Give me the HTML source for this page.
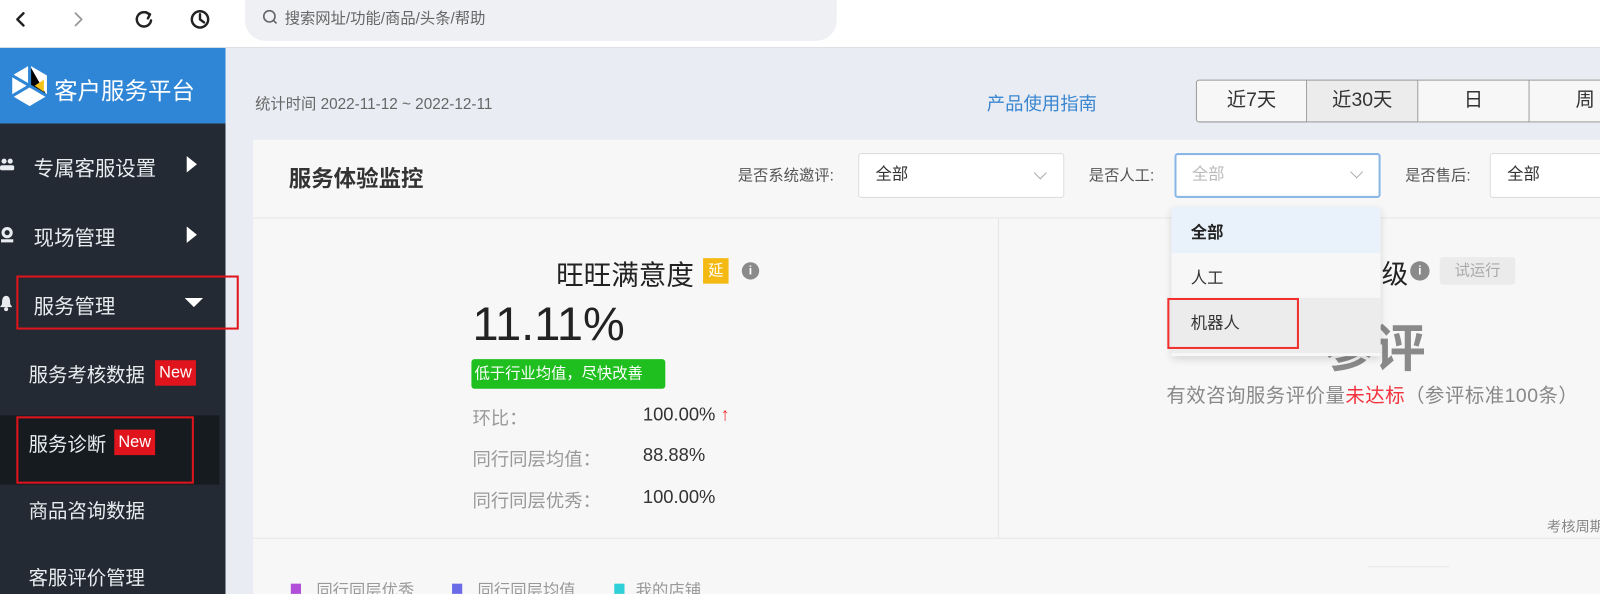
<!DOCTYPE html>
<html><head><meta charset="utf-8"><style>
*{margin:0;padding:0;box-sizing:border-box}
html,body{width:1600px;height:594px;overflow:hidden;background:#e9edf3}
body{position:relative;font-family:"Liberation Sans","Noto Sans CJK SC",sans-serif;color:#333}
#w{position:absolute;left:0;top:0;width:1568px;height:582px;transform:scale(1.0204);transform-origin:0 0}
.a{position:absolute;white-space:nowrap}
.side{color:#e8ecf0;font-size:20px}
.new{background:#e0141c;color:#fff;font-size:16px;padding:0 4px;height:25px;line-height:25px}
.lab{color:#555;font-size:15px}
.sel{background:#fff;border:1px solid #ddd;border-radius:3px;height:44px;font-size:16px;line-height:42px;padding-left:16px}
.chev{position:absolute;right:18px;top:14px;width:9px;height:9px;border-right:1px solid #aaa;border-bottom:1px solid #aaa;transform:rotate(45deg)}
.tab{top:78px;height:42px;width:109px;border:1px solid #999;border-left:none;background:#f7f7f7;font-size:19px;text-align:center;line-height:40px}
.g{color:#999;font-size:18px}
.v{color:#333;font-size:18px}
.info{width:17px;height:17px;border-radius:50%;background:#8a8a8a;color:#fff;font-size:12px;text-align:center;line-height:17px;font-weight:bold}
</style></head><body><div id="w">
<div class="a" style="left:0;top:0;width:1640px;height:47px;background:#fff;border-bottom:1px solid #dcdfe4"></div>
<svg class="a" style="left:10px;top:8px" width="200" height="24" viewBox="0 0 200 24" fill="none" stroke="#222" stroke-width="2.4" stroke-linecap="round" stroke-linejoin="round">
<path d="M13 5 L7 11 L13 17"/>
<path d="M64 5 L70 11 L64 17" stroke="#999" stroke-width="1.8"/>
<path d="M136 6 A7 7 0 1 0 138 12"/><path d="M133 4 L137 6 L135 10" />
<circle cx="186" cy="11" r="8"/><path d="M186 6 V11 L190 14"/>
</svg>
<div class="a" style="left:240px;top:0;width:580px;height:40px;background:#eef0f3;border-radius:0 0 20px 20px"></div>
<svg class="a" style="left:257px;top:9px" width="16" height="16" fill="none" stroke="#666" stroke-width="1.6"><circle cx="7" cy="7" r="5.5"/><path d="M11 11 L14 14"/></svg>
<div class="a" style="left:279px;top:7px;font-size:15px;color:#666">搜索网址/功能/商品/头条/帮助</div>
<div class="a" style="left:0;top:47px;width:221px;height:74px;background:#2f86d6"></div>
<svg class="a" style="left:10px;top:63px" width="38" height="42" viewBox="0 0 38 42"><polygon points="19,1 36,11 36,31 19,41 2,31 2,11" fill="#fff"/><path d="M19 1 L19 21 L36 31 M19 21 L2 31 M2 11 L19 21" stroke="#2f86d6" stroke-width="3"/><polygon points="24,21 33,15 33,27" fill="#f2c318"/></svg>
<div class="a" style="left:53px;top:70px;color:#fff;font-size:23px">客户服务平台</div>
<div class="a" style="left:0;top:121px;width:221px;height:473px;background:#232a33"></div>
<div class="a" style="left:0;top:407px;width:215px;height:68px;background:#161b20"></div>
<svg class="a" style="left:0;top:155px" width="14" height="12" fill="#e8ecf0"><circle cx="4" cy="3" r="2.5"/><circle cx="10" cy="3" r="2.5"/><rect x="0" y="7" width="14" height="5" rx="2"/></svg>
<div class="a side" style="left:33px;top:149px">专属客服设置</div>
<svg class="a" style="left:0;top:222px" width="14" height="16" fill="none" stroke="#e8ecf0" stroke-width="3"><circle cx="7" cy="6" r="4"/><path d="M1 14 H13"/></svg>
<div class="a side" style="left:33px;top:217px">现场管理</div>
<div class="a" style="left:183px;top:153px;border-left:10px solid #fff;border-top:8px solid transparent;border-bottom:8px solid transparent"></div>
<div class="a" style="left:183px;top:222px;border-left:10px solid #fff;border-top:8px solid transparent;border-bottom:8px solid transparent"></div>
<svg class="a" style="left:0;top:289px" width="12" height="16" fill="#e8ecf0"><path d="M6 1 C2 1 2 6 2 9 L0 12 H12 L10 9 C10 6 10 1 6 1Z"/><circle cx="6" cy="14" r="2"/></svg>
<div class="a side" style="left:33px;top:284px">服务管理</div>
<div class="a" style="left:181px;top:292px;border-top:9px solid #fff;border-left:9px solid transparent;border-right:9px solid transparent"></div>
<div class="a" style="left:16px;top:270px;width:218px;height:53px;border:2px solid #e0141c"></div>
<div class="a side" style="left:28px;top:353px;font-size:19px">服务考核数据</div>
<div class="a new" style="left:152px;top:353px">New</div>
<div class="a side" style="left:28px;top:421px;font-size:19px">服务诊断</div>
<div class="a new" style="left:112px;top:421px">New</div>
<div class="a" style="left:16px;top:408px;width:174px;height:66px;border:2px solid #e0141c"></div>
<div class="a side" style="left:28px;top:486px;font-size:19px">商品咨询数据</div>
<div class="a side" style="left:28px;top:552px;font-size:19px">客服评价管理</div>
<div class="a" style="left:250px;top:91px;font-size:15px;color:#666">统计时间 2022-11-12 ~ 2022-12-11</div>
<div class="a" style="left:967px;top:88px;font-size:18px;color:#3a86d0">产品使用指南</div>
<div class="a tab" style="left:1172px;border-left:1px solid #999;border-radius:3px 0 0 3px">近7天</div>
<div class="a tab" style="left:1281px;background:#ececec">近30天</div>
<div class="a tab" style="left:1390px">日</div>
<div class="a tab" style="left:1499px;width:110px">周</div>
<div class="a" style="left:248px;top:137px;width:1352px;height:457px;background:#f7f7f7"></div>
<div class="a" style="left:248px;top:213px;width:1352px;height:1px;background:#e6e6e6"></div>
<div class="a" style="left:978px;top:214px;width:1px;height:313px;background:#e6e6e6"></div>
<div class="a" style="left:248px;top:527px;width:1352px;height:1px;background:#e6e6e6"></div>
<div class="a" style="left:283px;top:158px;font-size:22px;font-weight:bold;color:#333">服务体验监控</div>
<div class="a lab" style="left:723px;top:161px">是否系统邀评:</div>
<div class="a sel" style="left:841px;top:150px;width:202px">全部<i class="chev"></i></div>
<div class="a lab" style="left:1067px;top:161px">是否人工:</div>
<div class="a sel" style="left:1151px;top:150px;width:202px;border:2px solid #8ab8e6;color:#bbb;padding-left:15px;line-height:40px">全部<i class="chev" style="right:17px;top:12px"></i></div>
<div class="a lab" style="left:1377px;top:161px">是否售后:</div>
<div class="a sel" style="left:1460px;top:150px;width:160px">全部</div>
<div class="a" style="left:545px;top:248px;font-size:27px;color:#222">旺旺满意度</div>
<div class="a" style="left:689px;top:253px;width:25px;height:25px;background:#f5b914;color:#fff;font-size:15px;text-align:center;line-height:25px">延</div>
<div class="a info" style="left:727px;top:257px">i</div>
<div class="a" style="left:463px;top:290px;font-size:46px;color:#222">11.11%</div>
<div class="a" style="left:462px;top:352px;width:190px;height:29px;background:#1fbf1f;border-radius:3px;color:#fff;font-size:15px;line-height:29px;padding-left:3px">低于行业均值，尽快改善</div>
<div class="a g" style="left:463px;top:396px">环比：</div>
<div class="a v" style="left:630px;top:396px">100.00% <span style="color:#e33">↑</span></div>
<div class="a g" style="left:463px;top:436px">同行同层均值：</div>
<div class="a v" style="left:630px;top:436px">88.88%</div>
<div class="a g" style="left:463px;top:477px">同行同层优秀：</div>
<div class="a v" style="left:630px;top:477px">100.00%</div>
<div class="a" style="left:1354px;top:249px;font-size:26px;color:#222">级</div>
<div class="a info" style="left:1382px;top:256px;width:19px;height:19px;line-height:19px">i</div>
<div class="a" style="left:1411px;top:252px;width:74px;height:27px;background:#ebebeb;border-radius:3px;color:#aaa;font-size:15px;text-align:center;line-height:27px">试运行</div>
<div class="a" style="left:1297px;top:302px;font-size:50px;font-weight:bold;color:#8a8a8a">参评</div>
<div class="a" style="left:1143px;top:373px;font-size:19px;letter-spacing:0.5px;color:#888">有效咨询服务评价量<span style="color:#f2323c">未达标</span>（参评标准100条）</div>
<div class="a" style="left:1516px;top:506px;font-size:14px;color:#888">考核周期</div>
<div class="a" style="left:1340px;top:555px;width:80px;height:1px;background:#e6e6e6"></div>
<div class="a" style="left:285px;top:572px;width:10px;height:10px;background:#b14fd8"></div>
<div class="a g" style="left:310px;top:565px;font-size:16px">同行同层优秀</div>
<div class="a" style="left:443px;top:572px;width:10px;height:10px;background:#6b6be8"></div>
<div class="a g" style="left:468px;top:565px;font-size:16px">同行同层均值</div>
<div class="a" style="left:602px;top:572px;width:10px;height:10px;background:#2fd0d8"></div>
<div class="a g" style="left:623px;top:565px;font-size:16px">我的店铺</div>
<div class="a" style="left:1148px;top:203px;width:205px;height:146px;background:#f7f7f7;box-shadow:0 3px 8px rgba(0,0,0,.15)"></div>
<div class="a" style="left:1148px;top:203px;width:205px;height:45px;background:#e9f2fb"></div>
<div class="a" style="left:1167px;top:214px;font-size:16px;font-weight:bold;color:#222">全部</div>
<div class="a" style="left:1167px;top:259px;font-size:16px;color:#333">人工</div>
<div class="a" style="left:1148px;top:292px;width:205px;height:54px;background:#ececec"></div>
<div class="a" style="left:1167px;top:303px;font-size:16px;color:#333">机器人</div>
<div class="a" style="left:1144px;top:292px;width:129px;height:50px;border:2px solid #f23030"></div>
</div></body></html>
